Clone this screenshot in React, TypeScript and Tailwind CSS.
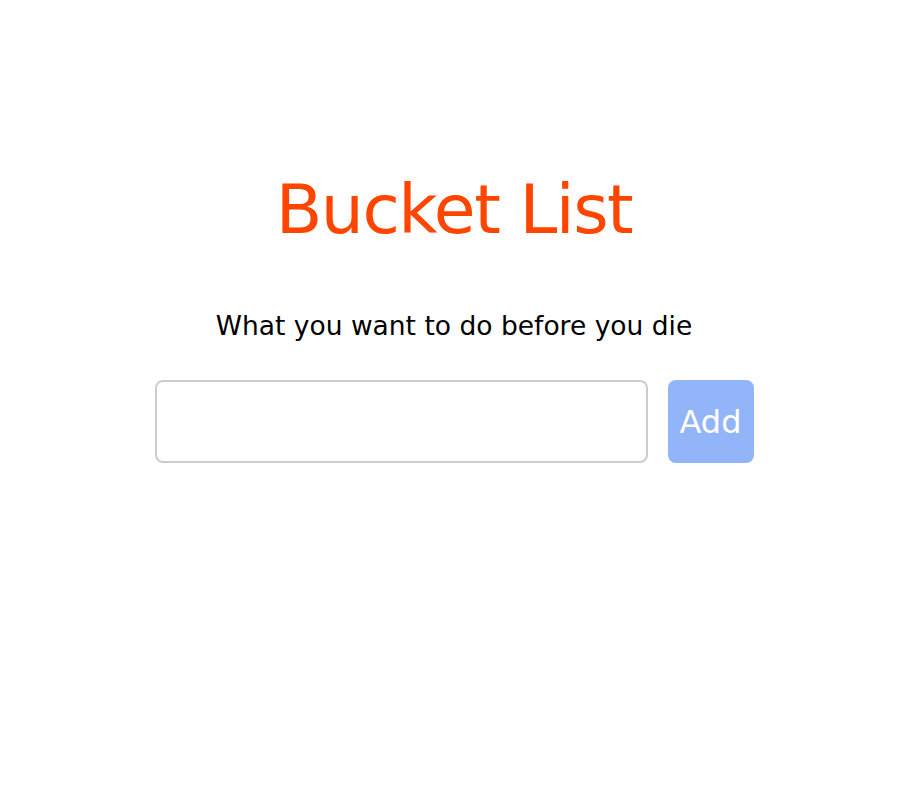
export default function App() {
  return (
    <div className="min-h-screen bg-white flex flex-col items-center pt-[160px]" style={{ fontFamily: '"DejaVu Sans", sans-serif' }}>
      <h1 className="text-[68px] leading-[100px] tracking-[-1.5px] text-[#ff4500] font-normal pl-[8px]">Bucket List</h1>
      <p className="mt-[46px] text-[26.5px] leading-[40px] text-black pl-[8px]">What you want to do before you die</p>
      <div className="mt-[34px] flex gap-[20px] pl-[8px]">
        <input className="w-[493px] h-[83px] border-2 border-[#cccccc] rounded-[8px] outline-none px-3 text-[24px]" />
        <button className="w-[86px] h-[83px] rounded-[8px] bg-[#92b4f8] text-white text-[32px]">Add</button>
      </div>
    </div>
  );
}
